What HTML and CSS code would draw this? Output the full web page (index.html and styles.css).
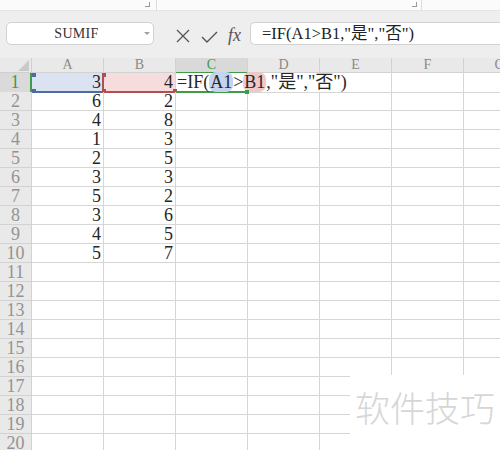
FILE: index.html
```html
<!DOCTYPE html>
<html lang="zh-CN">
<head>
<meta charset="utf-8">
<title>SUMIF</title>
<link rel="stylesheet" href="styles.css">
</head>
<body>
<div class="app">
  <div class="ribbon-edge">
    <span class="launcher l1"></span><span class="sep s1"></span>
    <span class="launcher l2"></span><span class="sep s2"></span>
  </div>
  <div class="fbar">
    <div class="namebox"><span class="name">SUMIF</span><span class="caret"></span></div>
    <svg class="ico ico-x" width="14" height="14" viewBox="0 0 14 14"><path d="M1 1 L13 13 M13 1 L1 13" stroke="#555" stroke-width="1.3" fill="none"/></svg>
    <svg class="ico ico-ok" width="17" height="12" viewBox="0 0 17 12"><path d="M1 6 L6 11 L16 1" stroke="#555" stroke-width="1.4" fill="none"/></svg>
    <span class="fx">fx</span>
    <div class="fbox">=IF(A1&gt;B1,"是","否")</div>
  </div>
  <div class="sheet">
    <div class="row hdr">
      <div class="corner"><span class="tri"></span></div>
      <div class="ch">A</div><div class="ch">B</div><div class="ch active">C</div><div class="ch">D</div><div class="ch">E</div><div class="ch">F</div><div class="ch">G</div>
    </div>
    <div class="row">
      <div class="rh active">1</div>
      <div class="c num refa">3<span class="sq sq-tl"></span><span class="sq sq-bl"></span></div>
      <div class="c num refb">4<span class="sq sq-tl"></span><span class="sq sq-bl"></span><span class="sq sq-br"></span></div>
      <div class="c cur"><span class="ftext">=IF(<span class="hla">A1</span>&gt;<span class="hlb">B1</span>,"是","否")</span><span class="gsq"></span></div>
      <div class="c noright"></div><div class="c"></div><div class="c"></div><div class="c"></div>
    </div>
    <div class="row"><div class="rh">2</div><div class="c num">6</div><div class="c num">2</div><div class="c"></div><div class="c"></div><div class="c"></div><div class="c"></div><div class="c"></div></div>
    <div class="row"><div class="rh">3</div><div class="c num">4</div><div class="c num">8</div><div class="c"></div><div class="c"></div><div class="c"></div><div class="c"></div><div class="c"></div></div>
    <div class="row"><div class="rh">4</div><div class="c num">1</div><div class="c num">3</div><div class="c"></div><div class="c"></div><div class="c"></div><div class="c"></div><div class="c"></div></div>
    <div class="row"><div class="rh">5</div><div class="c num">2</div><div class="c num">5</div><div class="c"></div><div class="c"></div><div class="c"></div><div class="c"></div><div class="c"></div></div>
    <div class="row"><div class="rh">6</div><div class="c num">3</div><div class="c num">3</div><div class="c"></div><div class="c"></div><div class="c"></div><div class="c"></div><div class="c"></div></div>
    <div class="row"><div class="rh">7</div><div class="c num">5</div><div class="c num">2</div><div class="c"></div><div class="c"></div><div class="c"></div><div class="c"></div><div class="c"></div></div>
    <div class="row"><div class="rh">8</div><div class="c num">3</div><div class="c num">6</div><div class="c"></div><div class="c"></div><div class="c"></div><div class="c"></div><div class="c"></div></div>
    <div class="row"><div class="rh">9</div><div class="c num">4</div><div class="c num">5</div><div class="c"></div><div class="c"></div><div class="c"></div><div class="c"></div><div class="c"></div></div>
    <div class="row"><div class="rh">10</div><div class="c num">5</div><div class="c num">7</div><div class="c"></div><div class="c"></div><div class="c"></div><div class="c"></div><div class="c"></div></div>
    <div class="row"><div class="rh">11</div><div class="c"></div><div class="c"></div><div class="c"></div><div class="c"></div><div class="c"></div><div class="c"></div><div class="c"></div></div>
    <div class="row"><div class="rh">12</div><div class="c"></div><div class="c"></div><div class="c"></div><div class="c"></div><div class="c"></div><div class="c"></div><div class="c"></div></div>
    <div class="row"><div class="rh">13</div><div class="c"></div><div class="c"></div><div class="c"></div><div class="c"></div><div class="c"></div><div class="c"></div><div class="c"></div></div>
    <div class="row"><div class="rh">14</div><div class="c"></div><div class="c"></div><div class="c"></div><div class="c"></div><div class="c"></div><div class="c"></div><div class="c"></div></div>
    <div class="row"><div class="rh">15</div><div class="c"></div><div class="c"></div><div class="c"></div><div class="c"></div><div class="c"></div><div class="c"></div><div class="c"></div></div>
    <div class="row"><div class="rh">16</div><div class="c"></div><div class="c"></div><div class="c"></div><div class="c"></div><div class="c"></div><div class="c"></div><div class="c"></div></div>
    <div class="row"><div class="rh">17</div><div class="c"></div><div class="c"></div><div class="c"></div><div class="c"></div><div class="c"></div><div class="c"></div><div class="c"></div></div>
    <div class="row"><div class="rh">18</div><div class="c"></div><div class="c"></div><div class="c"></div><div class="c"></div><div class="c"></div><div class="c"></div><div class="c"></div></div>
    <div class="row"><div class="rh">19</div><div class="c"></div><div class="c"></div><div class="c"></div><div class="c"></div><div class="c"></div><div class="c"></div><div class="c"></div></div>
    <div class="row"><div class="rh">20</div><div class="c"></div><div class="c"></div><div class="c"></div><div class="c"></div><div class="c"></div><div class="c"></div><div class="c"></div></div>
  </div>
  <div class="watermark">软件技巧</div>
</div>
</body>
</html>
```
FILE: styles.css
```css
html, body {
  margin: 0;
  padding: 0;
  background: #ffffff;
}
body {
  width: 500px;
  height: 450px;
  overflow: hidden;
  font-family: "Liberation Serif", "Noto Sans CJK SC", serif;
}
.app {
  position: relative;
  width: 500px;
  height: 450px;
  overflow: hidden;
}

/* ribbon bottom edge */
.ribbon-edge {
  height: 10px;
  background: #fbfbfb;
  display: flex;
  align-items: flex-start;
}
.launcher {
  width: 4px;
  height: 4px;
  margin-top: 2px;
  border-right: 1px solid #9a9a9a;
  border-bottom: 1px solid #9a9a9a;
}
.l1 { margin-left: 145px; }
.l2 { margin-left: 255px; }
.sep {
  width: 1px;
  height: 10px;
  background: #dcdcdc;
}
.s1 { margin-left: 6px; }
.s2 { margin-left: 4px; }

/* formula bar */
.fbar {
  height: 48px;
  box-sizing: border-box;
  background: #eeeeee;
  border-top: 1px solid #e4e4e4;
  display: flex;
  align-items: flex-start;
  padding: 11px 0 0 6px;
}
.namebox {
  width: 148px;
  height: 23px;
  box-sizing: border-box;
  background: #ffffff;
  border: 1px solid #d2d2d2;
  border-radius: 5px;
  display: flex;
  align-items: center;
}
.name {
  flex: 1;
  text-align: center;
  font-size: 14px;
  letter-spacing: 0.3px;
  color: #333;
  padding-left: 2px;
}
.caret {
  width: 0;
  height: 0;
  border-left: 3px solid transparent;
  border-right: 3px solid transparent;
  border-top: 3px solid #a0a0a0;
  margin-right: 3px;
}
.ico { display: block; }
.ico-x { margin: 7px 0 0 22px; }
.ico-ok { margin: 9px 0 0 11px; }
.fx {
  font-style: italic;
  font-size: 18px;
  color: #555;
  margin: 3px 0 0 10px;
  line-height: 20px;
}
.fbox {
  flex: 1;
  height: 23px;
  box-sizing: border-box;
  margin-left: 9px;
  background: #ffffff;
  border: 1px solid #d2d2d2;
  border-right: none;
  border-radius: 5px 0 0 5px;
  padding-left: 11px;
  font-size: 16.5px;
  line-height: 22px;
  color: #222;
  white-space: nowrap;
}

/* sheet */
.sheet {
  width: 536px;
}
.row {
  display: grid;
  grid-template-columns: 32px repeat(7, 72px);
  height: 19px;
}
.row.hdr {
  height: 15px;
}
.corner, .ch, .rh, .c {
  box-sizing: border-box;
  border-right: 1px solid #d6d6d6;
  border-bottom: 1px solid #d6d6d6;
}
.corner {
  background: #e9e9e9;
  border-color: #cfcfcf;
  position: relative;
}
.tri {
  position: absolute;
  right: 2px;
  bottom: 1px;
  width: 0;
  height: 0;
  border-left: 11px solid transparent;
  border-bottom: 11px solid #c9c9c9;
}
.ch {
  background: #e9e9e9;
  border-color: #d2d2d2;
  text-align: center;
  font-size: 14px;
  line-height: 14px;
  color: #8a8a8a;
}
.ch.active {
  background: #d9d9d9;
  color: #3f9a4a;
  border-bottom: 1px solid #3f9a4a;
}
.rh {
  background: #e9e9e9;
  border-color: #d2d2d2;
  text-align: center;
  font-size: 18px;
  line-height: 18px;
  color: #939393;
}
.rh.active {
  background: #dadada;
  color: #3f9a4a;
  border-right: 2px solid #3f9a4a;
}
.c {
  position: relative;
  font-size: 18px;
  line-height: 18px;
  color: #262626;
}
.num {
  text-align: right;
  padding-right: 2px;
}
.noright {
  border-right-color: transparent;
}

/* formula reference highlights */
.refa {
  background: #dbe3f3;
  border-bottom: 2px solid #4d6b9c;
  border-right: 2px solid #b14f4f;
  padding-right: 1px;
}
.refb {
  background: #f6dcdc;
  border-bottom: 2px solid #b14f4f;
}
.sq {
  position: absolute;
  width: 4px;
  height: 4px;
}
.refa .sq { background: #4d6b9c; }
.refb .sq { background: #b14f4f; }
.sq-tl { left: 0; top: 0; }
.sq-bl { left: 0; bottom: -2px; }
.sq-br { right: -2px; bottom: -2px; }
.refb .sq-tl, .refb .sq-bl { left: -2px; }

.cur {
  border-right-color: transparent;
  border-bottom: 2px solid #3f9a4a;
  padding-left: 1px;
  z-index: 2;
}
.ftext {
  white-space: nowrap;
}
.hla {
  background: #c6d3ee;
  border-radius: 7px;
  padding: 0 1px;
}
.hlb {
  background: #efc9c9;
  border-radius: 7px;
  padding: 0 1px;
}
.gsq {
  position: absolute;
  right: -2px;
  bottom: -3px;
  width: 4px;
  height: 4px;
  background: #3f9a4a;
}

/* watermark overlay */
.watermark {
  position: absolute;
  left: 350px;
  top: 375px;
  right: 0;
  bottom: 0;
  background: #ffffff;
  font-family: "Noto Sans CJK SC", sans-serif;
  font-weight: 300;
  font-size: 35px;
  line-height: 35px;
  color: #d6d6d6;
  padding: 14px 0 0 5px;
  white-space: nowrap;
}
```
